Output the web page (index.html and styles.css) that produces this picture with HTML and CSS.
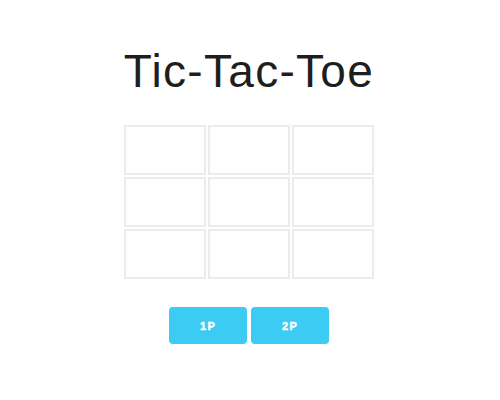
FILE: index.html
```html
<!DOCTYPE html>
<html>
<head>
  <meta charset="UTF-8">
  <title>Tic-Tac-Toe</title>
  <link rel="stylesheet" href="styles.css">
</head>
<body>
  <div class="game">
    <h1 class="title">Tic-Tac-Toe</h1>
    <div class="board">
      <div class="cell"></div>
      <div class="cell"></div>
      <div class="cell"></div>
      <div class="cell"></div>
      <div class="cell"></div>
      <div class="cell"></div>
      <div class="cell"></div>
      <div class="cell"></div>
      <div class="cell"></div>
    </div>
    <div class="modes">
      <button class="mode">1P</button>
      <button class="mode">2P</button>
    </div>
  </div>
</body>
</html>
```

FILE: styles.css
```css
body { margin: 0; background: #fff; font-family: "Liberation Sans", Arial, sans-serif; }
.game { display: flex; flex-direction: column; align-items: center; padding-top: 45px; padding-right: 2px; }
.title { margin: 0; font-size: 46px; font-weight: normal; color: #1e1e1e; line-height: 53px; letter-spacing: 1.3px; }
.board { display: grid; grid-template-columns: repeat(3, 82px); grid-auto-rows: 50px; gap: 2px; margin-top: 27px; }
.cell { border: 2px solid #ececec; background: #fff; }
.modes { display: flex; gap: 4px; margin-top: 28px; }
.mode { width: 78px; height: 37px; border: none; border-radius: 4px; background: #3ccbf2; color: #fff; font-family: "Liberation Sans", Arial, sans-serif; font-weight: bold; font-size: 11px; letter-spacing: 1.2px; -webkit-text-stroke: 0.4px #fff; cursor: pointer; }
```
